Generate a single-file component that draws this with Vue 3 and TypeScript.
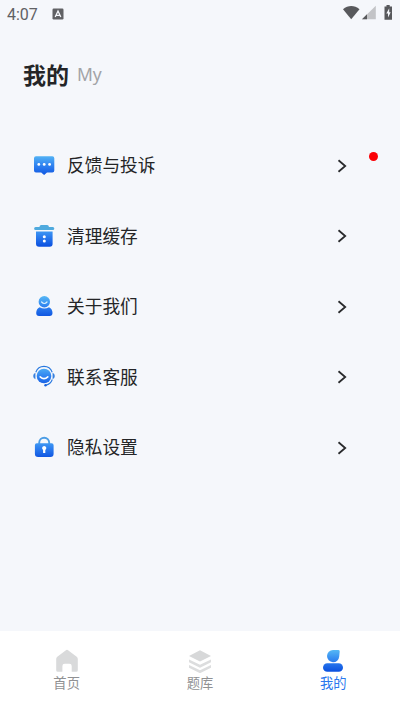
<script setup lang="ts">
import { ref } from 'vue'

interface MenuItem {
  id: string
  label: string
  badge?: boolean
}

const items: MenuItem[] = [
  { id: 'feedback', label: '反馈与投诉', badge: true },
  { id: 'cache', label: '清理缓存' },
  { id: 'about', label: '关于我们' },
  { id: 'service', label: '联系客服' },
  { id: 'privacy', label: '隐私设置' },
]

const tabs = [
  { id: 'home', label: '首页' },
  { id: 'library', label: '题库' },
  { id: 'mine', label: '我的' },
]
const active = ref('mine')
</script>

<template>
  <div class="screen">
    <svg class="defs" width="0" height="0" aria-hidden="true">
      <defs>
        <linearGradient id="blue" gradientUnits="userSpaceOnUse" x1="12" y1="1" x2="12" y2="22">
          <stop offset="0" stop-color="#56b8f5" />
          <stop offset="0.5" stop-color="#2f82f0" />
          <stop offset="1" stop-color="#0d52e0" />
        </linearGradient>
      </defs>
    </svg>

    <header class="status">
      <span class="time">4:07</span>
      <svg class="keyboard" width="12" height="12" viewBox="0 0 12 12">
        <rect x="0.5" y="0.5" width="11" height="11" rx="1.2" fill="#606164" />
        <path d="M3.2 9 6 3l2.8 6M4.2 7.3h3.6" fill="none" stroke="#f5f7fb" stroke-width="1.3" />
      </svg>
      <svg class="signals" width="52" height="16" viewBox="0 0 52 16">
        <path d="M0 4.200C5-.2 11.500-.2 16.500 4.200L8.200 14.300Z" fill="#58595c" />
        <path d="M32.800 .7v13.600H19Z" fill="#c3c4c7" />
        <path d="M24 9.300v5h-5Z" fill="#58595c" />
        <path d="M41.500 1.500h2V0h3.200v1.500h2.300V14.800H41.500Z" fill="#58595c" />
        <path d="M46.200 3.200 43.300 8.400h1.700v4L47.700 7.300h-1.500Z" fill="#f5f7fb" />
      </svg>
    </header>

    <div class="heading">
      <h1>我的</h1>
      <span>My</span>
    </div>

    <main class="menu">
      <div v-for="item in items" :key="item.id" class="row">
        <svg class="icon" width="24" height="24" viewBox="0 0 24 24">
          <template v-if="item.id === 'feedback'">
            <path d="M4 2.300h16.300a2 2 0 0 1 2 2v12.200a2 2 0 0 1-2 2H15l-2.900 2.600-2.900-2.600H4a2 2 0 0 1-2-2V4.300a2 2 0 0 1 2-2Z" fill="url(#blue)" />
            <g fill="#fff"><circle cx="6.800" cy="10.400" r="1.400" /><circle cx="12.200" cy="10.400" r="1.400" /><circle cx="17.600" cy="10.400" r="1.400" /></g>
          </template>
          <template v-else-if="item.id === 'cache'">
            <path d="M7.500 3c0-1.300.8-2 1.800-2h5.800c1 0 1.800.7 1.800 2h3.900a1.500 1.500 0 0 1 0 3H3.600a1.500 1.500 0 0 1 0-3Z" fill="#4faade" />
            <path d="M4 7.500h16.600v12.200a3 3 0 0 1-3 3H7a3 3 0 0 1-3-3Z" fill="url(#blue)" />
            <circle cx="12.300" cy="12.700" r="1.500" fill="#fff" /><circle cx="12.300" cy="17" r="1.500" fill="#fff" />
          </template>
          <template v-else-if="item.id === 'about'">
            <circle cx="12.300" cy="6.700" r="5.700" fill="url(#blue)" />
            <path d="M9.600 7q2.700 3 5.400 0" fill="none" stroke="#d9f1ff" stroke-width="1.200" stroke-linecap="round" />
            <path d="M7.600 12.200q4.700 2.400 9.400 0 3.500 1.800 3.500 5.800 0 3-2.900 3H7.100q-2.900 0-2.900-3 0-4 3.400-5.800Z" fill="url(#blue)" />
          </template>
          <template v-else-if="item.id === 'service'">
            <circle cx="12" cy="11" r="7.300" fill="url(#blue)" />
            <path d="M3.800 7.200C5.200 3.500 8.300 1.400 12 1.400s6.800 2.100 8.200 5.800M20.300 14.500c-1.100 3-3.100 4.900-6.300 5.600" fill="none" stroke="#2878df" stroke-width="1.100" />
            <path d="M3.400 7.700v6.500Q1.200 13.400 1.200 11t2.200-3.300ZM20.600 7.700v6.500q2.200-.8 2.200-3.200t-2.200-3.300Z" fill="#3680de" />
            <path d="M8.200 11.900q3.800 3.600 7.600 0" fill="none" stroke="#fff" stroke-width="1.600" stroke-linecap="round" />
            <circle cx="13.500" cy="20.200" r="1.200" fill="#1760dc" />
          </template>
          <template v-else>
            <path d="M7.200 9V6.700a5 5 0 0 1 10 0V9" fill="none" stroke="#4b9de5" stroke-width="1.900" />
            <path d="M5 7.300h14.600a2 2 0 0 1 2 2v8.400a3.200 3.200 0 0 1-3.200 3.200H6.100a3.200 3.200 0 0 1-3.200-3.200V9.300a2 2 0 0 1 2.100-2Z" fill="url(#blue)" />
            <path d="M12.200 10a2.100 2.100 0 0 1 1.100 3.900V17h-2.200v-3.100A2.100 2.100 0 0 1 12.200 10Z" fill="#fff" />
          </template>
        </svg>
        <span class="label">{{ item.label }}</span>
        <svg class="chevron" width="10" height="14" viewBox="0 0 10 14">
          <path d="m1.500 1.300 6.700 5.700-6.700 5.700" fill="none" stroke="#292a2c" stroke-width="1.800" />
        </svg>
        <i v-if="item.badge" class="badge"></i>
      </div>
    </main>

    <nav class="tabs">
      <button v-for="tab in tabs" :key="tab.id" class="tab" :class="{ active: active === tab.id }" @click="active = tab.id">
        <svg width="24" height="24" viewBox="0 0 24 24">
          <path v-if="tab.id === 'home'" d="M10.600 1.400a2.300 2.300 0 0 1 2.800 0l8.300 6.300q1.100.8 1.100 2.200v11.300q0 1.600-1.600 1.600h-4.500V17q0-2.300-2.300-2.300h-4.700Q7.400 14.700 7.400 17v5.800H2.800q-1.600 0-1.600-1.600V9.900q0-1.400 1.100-2.200Z" fill="#d9dadb" />
          <template v-else-if="tab.id === 'library'">
            <path d="m12 1.300 11 5.600-11 5.600L1 6.900Z" fill="#d7d8d9" />
            <path d="m1 10.400 11 5.400 11-5.400v2.900l-11 5.400-11-5.400ZM1 15.900l11 5.400 11-5.400v2.900l-11 5.400-11-5.400Z" fill="#dcddde" />
          </template>
          <template v-else>
            <path d="M12 1h5.500Q19 1 18.700 2.600L18.200 7.500A6.100 6.100 0 1 1 12 1Z" fill="url(#blue)" />
            <rect x="2" y="14.200" width="20" height="8.600" rx="4.300" fill="url(#blue)" />
          </template>
        </svg>
        <span>{{ tab.label }}</span>
      </button>
    </nav>
  </div>
</template>

<style>
body {
  margin: 0;
}
</style>

<style scoped>
.screen {
  display: flex;
  flex-direction: column;
  box-sizing: border-box;
  width: 100%;
  height: 100vh;
  overflow: hidden;
  background: #f5f7fb;
  color: #242527;
  font-family: "Noto Sans CJK SC", sans-serif;
}
.defs {
  position: absolute;
}
.status {
  display: flex;
  align-items: center;
  flex: none;
  height: 28px;
  padding: 0 5px 0 7px;
}
.time {
  width: 45px;
  padding-top: 1px;
  color: #606164;
  font: 16px/28px Roboto, sans-serif;
}
.signals {
  margin: -2px 0 0 auto;
}
.heading {
  display: flex;
  align-items: center;
  flex: none;
  height: 36px;
  margin-top: 28px;
  padding: 0 23px;
}
.heading h1 {
  margin: 0;
  font-size: 23px;
  font-weight: 700;
  line-height: 36px;
}
.heading span {
  margin: 0 0 0 8px;
  color: #a2a3a6;
  font: 17.500px/36px "Noto Sans", sans-serif;
}
.menu {
  flex: 1;
  padding: 38.800px 22px 0 32px;
}
.row {
  display: flex;
  align-items: center;
  height: 70.400px;
}
.label {
  width: 270px;
  margin: -3px 0 0 11px;
  font-size: 17.700px;
  line-height: 26px;
}
.badge {
  width: 9px;
  height: 9px;
  margin: -18px 0 0 21.500px;
  border-radius: 50%;
  background: #fb0006;
}
.tabs {
  display: flex;
  flex: none;
  height: 81px;
  background: #fff;
}
.tab {
  display: flex;
  flex: 1;
  flex-direction: column;
  align-items: center;
  padding: 17.500px 0 0;
  border: 0;
  background: none;
  color: #909193;
  font-family: inherit;
  font-size: 13.300px;
  line-height: 19px;
}
.tab.active {
  color: #2b78ee;
}
</style>
